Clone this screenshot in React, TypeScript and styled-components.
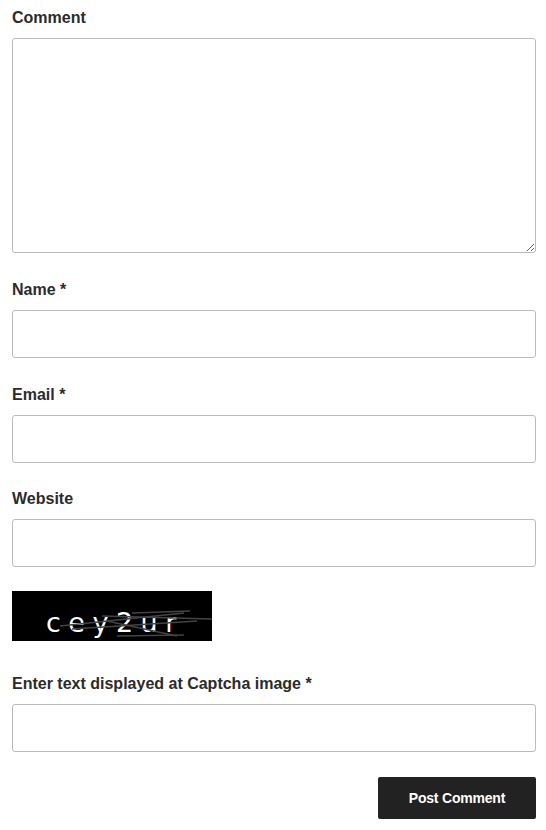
import React from "react";
import styled, { createGlobalStyle } from "styled-components";

const Global = createGlobalStyle`
  html, body { margin: 0; padding: 0; background: #fff; }
  body { font-family: "Liberation Sans", Arial, sans-serif; color: #333; }
`;

const Form = styled.form`
  display: flex;
  flex-direction: column;
  padding: 5px 10px 0 12px;
  width: 524px;
`;

const Field = styled.div<{ $gap?: number }>`
  display: flex;
  flex-direction: column;
  margin-bottom: ${(p) => p.$gap ?? 24}px;
`;

const Label = styled.label`
  display: block;
  font-size: 16px;
  line-height: 24px;
  padding-top: 1px;
  font-weight: 700;
  color: #2b2b2b;
  margin-bottom: 8px;
  letter-spacing: 0;
`;

const TextArea = styled.textarea`
  box-sizing: border-box;
  width: 524px;
  height: 215px;
  border: 1px solid #bbb;
  border-radius: 3px;
  padding: 10px;
  font: inherit;
  resize: vertical;
  background: #fff;
`;

const Input = styled.input`
  box-sizing: border-box;
  width: 524px;
  height: 48px;
  border: 1px solid #bbb;
  border-radius: 3px;
  padding: 10px;
  font: inherit;
  background: #fff;
`;

const Captcha = styled.div`
  width: 200px;
  height: 50px;
  background: #000;
  margin-bottom: 30px;
`;

const Actions = styled.div`
  display: flex;
  justify-content: flex-end;
`;

const Button = styled.button`
  width: 158px;
  height: 42px;
  background: #222;
  color: #fff;
  border: none;
  border-radius: 2px;
  font-family: "Liberation Sans", Arial, sans-serif;
  font-weight: 700;
  font-size: 14px;
  letter-spacing: -0.2px;
`;

export default function App() {
  return (
    <>
      <Global />
      <Form onSubmit={(e) => e.preventDefault()}>
        <Field>
          <Label>Comment</Label>
          <TextArea />
        </Field>
        <Field>
          <Label>Name *</Label>
          <Input />
        </Field>
        <Field $gap={23}>
          <Label>Email *</Label>
          <Input />
        </Field>
        <Field>
          <Label>Website</Label>
          <Input />
        </Field>
        <Captcha>
          <svg width="200" height="50" viewBox="0 0 200 50">
            <text
              x="34"
              y="41"
              fill="#fff"
              fontFamily="DejaVu Sans, sans-serif"
              fontSize="27"
              letterSpacing="7.5"
            >
              cey2ur
            </text>
            <g stroke="#444" strokeWidth="1.3" fill="none">
              <line x1="48" y1="35" x2="172" y2="22" />
              <line x1="60" y1="38" x2="185" y2="30" />
              <line x1="90" y1="25" x2="200" y2="28" />
              <line x1="95" y1="30" x2="165" y2="45" />
              <line x1="105" y1="45" x2="172" y2="44" />
              <line x1="120" y1="22" x2="178" y2="20" />
            </g>
          </svg>
        </Captcha>
        <Field $gap={25}>
          <Label>Enter text displayed at Captcha image *</Label>
          <Input />
        </Field>
        <Actions>
          <Button type="submit">Post Comment</Button>
        </Actions>
      </Form>
    </>
  );
}
